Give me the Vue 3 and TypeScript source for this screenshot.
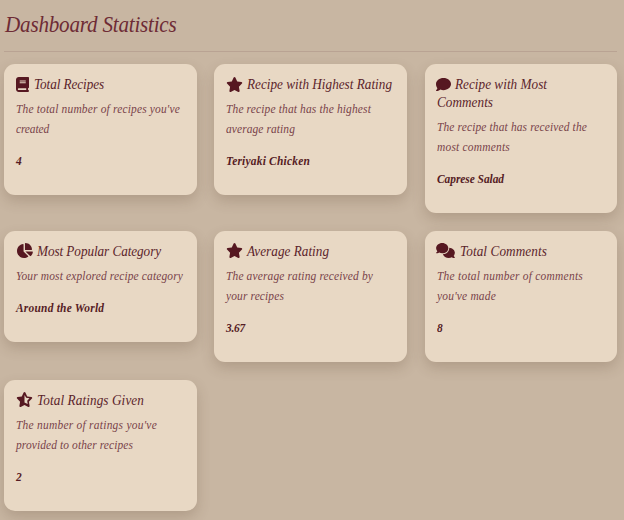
<script setup lang="ts">
interface Line {
  text: string
  width: number
}
interface Icon {
  box: string
  width: number
  path: string
}
interface Stat {
  icon: Icon
  gap: number
  title: Line[]
  description: Line[]
  value: Line
}

const starShape = 'M316.900 18C311.600 7 300.400 0 288.100 0s-23.400 7-28.800 18L195 150.300 51.400 171.500c-12 1.800-22 10.200-25.700 21.700s-.7 24.200 7.900 32.700L137.800 329 113.200 474.700c-2 12 3 24.200 12.900 31.300s23 8 33.800 2.300l128.300-68.500 128.300 68.500c10.800 5.700 23.900 4.900 33.800-2.300s14.900-19.300 12.900-31.300L438.500 329 542.700 225.900c8.600-8.500 11.700-21.200 7.900-32.700s-13.700-19.900-25.700-21.700L381.200 150.300 316.900 18z'
const star: Icon = { box: '0 0 576 512', width: 17, path: starShape }
const halfStar: Icon = {
  box: '0 0 576 512',
  width: 17,
  path: starShape + 'M288 100L346 197L458 215L380 298L396 410L288 358z',
}
const book: Icon = {
  box: '0 0 448 512',
  width: 13,
  path: 'M96 0C43 0 0 43 0 96V416c0 53 43 96 96 96H384h32c17.700 0 32-14.300 32-32s-14.300-32-32-32V384c17.700 0 32-14.300 32-32V32c0-17.700-14.300-32-32-32H384 96zm0 384H352v64H96c-17.700 0-32-14.300-32-32s14.300-32 32-32zM128 118H336V152H128zM128 182H336V216H128z',
}
const comment: Icon = {
  box: '0 0 512 512',
  width: 15,
  path: 'M512 240c0 114.900-114.600 208-256 208c-37.100 0-72.300-6.400-104.100-17.900c-11.900 8.700-31.300 20.600-54.300 30.600C73.600 471.100 44.700 480 16 480c-6.500 0-12.300-3.900-14.800-9.900c-2.500-6-1.100-12.800 3.400-17.400c20-20.500 36.700-48.700 42.700-72.900C17.600 341.700 0 292.900 0 240C0 125.100 114.600 32 256 32s256 93.100 256 208z',
}
const comments: Icon = {
  box: '0 0 640 512',
  width: 19,
  path: 'M208 352c114.900 0 208-78.800 208-176S322.900 0 208 0S0 78.800 0 176c0 38.600 14.700 74.300 39.600 103.400c-3.500 9.400-8.700 17.700-14.200 24.700c-4.800 6.200-9.700 11-13.300 14.300C4.700 325.200.2 330.200.2 337.200C.2 345.300 7.200 352 16 352c21.900 0 44-5.600 62.300-12.500c9.200-3.500 17.800-7.400 25.300-11.400C134.100 343.300 169.800 352 208 352zM448 176c0 112.300-99.100 196.900-216.500 207C255.800 457.400 336.400 512 432 512c38.200 0 73.900-8.700 104.700-23.900c7.500 4 16 7.900 25.300 11.400c18.300 6.900 40.300 12.500 62.200 12.500c8.800 0 15.800-6.700 15.800-14.800c0-7-4.500-12-11.600-18.900c-3.600-3.300-8.500-8.100-13.300-14.300c-5.500-7-10.700-15.400-14.200-24.700C625.300 410.300 640 374.600 640 336c0-92.800-84.900-168.900-192.600-175.500c.4 5.100.6 10.300.6 15.500z',
}
const pie: Icon = {
  box: '0 0 576 512',
  width: 17,
  path: 'M304 240V16.600c0-9 7-16.600 16-16.600C443.700 0 544 100.300 544 224c0 9-7.600 16-16.600 16H304zM32 272C32 150.700 122.100 50.300 239 34.300c9.200-1.300 17 6.100 17 15.400V288L412.500 444.500c6.700 6.700 6.200 17.700-1.500 23.100C371.800 495.600 323.800 512 272 512C139.500 512 32 404.600 32 272zm526.400 16c9.300 0 16.600 7.800 15.400 17c-7.700 55.900-34.600 105.600-73.900 142.300c-6 5.600-15.400 5.200-21.200-.7L320 288H558.400z',
}

const stats: Stat[] = [
  {
    icon: book,
    gap: 5,
    title: [{ text: 'Total Recipes', width: 70 }],
    description: [{ text: "The total number of recipes you've", width: 164 }, { text: 'created', width: 33 }],
    value: { text: '4', width: 6 },
  },
  {
    icon: star,
    gap: 4,
    title: [{ text: 'Recipe with Highest Rating', width: 145 }],
    description: [{ text: 'The recipe that has the highest', width: 145 }, { text: 'average rating', width: 69 }],
    value: { text: 'Teriyaki Chicken', width: 84 },
  },
  {
    icon: comment,
    gap: 4,
    title: [{ text: 'Recipe with Most', width: 92 }, { text: 'Comments', width: 56 }],
    description: [{ text: 'The recipe that has received the', width: 150 }, { text: 'most comments', width: 73 }],
    value: { text: 'Caprese Salad', width: 67 },
  },
  {
    icon: pie,
    gap: 4,
    title: [{ text: 'Most Popular Category', width: 124 }],
    description: [{ text: 'Your most explored recipe category', width: 167 }],
    value: { text: 'Around the World', width: 88.5 },
  },
  {
    icon: star,
    gap: 4,
    title: [{ text: 'Average Rating', width: 82 }],
    description: [{ text: 'The average rating received by', width: 147 }, { text: 'your recipes', width: 58 }],
    value: { text: '3.67', width: 19 },
  },
  {
    icon: comments,
    gap: 5,
    title: [{ text: 'Total Comments', width: 87 }],
    description: [{ text: 'The total number of comments', width: 146 }, { text: "you've made", width: 59 }],
    value: { text: '8', width: 6 },
  },
  {
    icon: halfStar,
    gap: 4.5,
    title: [{ text: 'Total Ratings Given', width: 107 }],
    description: [{ text: "The number of ratings you've", width: 141 }, { text: 'provided to other recipes', width: 117 }],
    value: { text: '2', width: 6 },
  },
]

// The lettering is condensed; tracking takes up what remains of each line's width.
const condense = 0.88
const pen = document.createElement('canvas').getContext('2d')!
function tracking(line: Line, font: string) {
  pen.font = `italic ${font} "Liberation Serif"`
  const spare = line.width / condense - pen.measureText(line.text).width
  return { letterSpacing: `${(spare / line.text.length).toFixed(3)}px` }
}
const heading: Line = { text: 'Dashboard Statistics', width: 171.5 }
</script>

<template>
  <main class="dashboard">
    <h1><span class="condensed" :style="tracking(heading, '400 24px')">{{ heading.text }}</span></h1>
    <div class="grid">
      <article v-for="(stat, i) in stats" :key="i" class="card">
        <h2>
          <span v-for="(line, n) in stat.title" :key="n" class="line">
            <svg v-if="n === 0" class="icon" :viewBox="stat.icon.box" :style="{ width: stat.icon.width + 'px', marginRight: stat.gap + 'px' }">
              <path :d="stat.icon.path" fill-rule="evenodd" />
            </svg>
            <span class="condensed" :style="tracking(line, '400 15px')">{{ line.text }}</span>
          </span>
        </h2>
        <p class="description">
          <span v-for="(line, n) in stat.description" :key="n" class="line">
            <span class="condensed" :style="tracking(line, '400 13px')">{{ line.text }}</span>
          </span>
        </p>
        <p class="value"><span class="condensed" :style="tracking(stat.value, '700 13px')">{{ stat.value.text }}</span></p>
      </article>
    </div>
  </main>
</template>

<style>
body {
  background: #c8b6a2;
  overflow: hidden;
}
</style>

<style scoped>
.dashboard {
  box-sizing: border-box;
  height: 520px;
  padding: 0 6.6px 0 4px;
  font-family: "Liberation Serif", serif;
  font-style: italic;
  white-space: nowrap;
}
.condensed {
  display: inline-block;
  transform: scaleX(0.88);
  transform-origin: left;
}
h1 {
  box-sizing: border-box;
  height: 52px;
  margin: 0 0 12px;
  padding: 9px 0 0 1px;
  border-bottom: 1px solid #b9a393;
  font-size: 24px;
  line-height: 30px;
  font-weight: 400;
  color: #6e2b35;
}
.grid {
  display: grid;
  grid-template-columns: repeat(3, 1fr);
  align-items: start;
  gap: 17.8px 17.5px;
}
.card {
  box-sizing: border-box;
  min-width: 0;
  padding: 11px 12px 24px;
  border-radius: 11px;
  background: #e8d8c4;
  box-shadow: 0 6px 14px rgba(80, 55, 35, 0.2);
}
h2 {
  margin: 0 0 6px;
  font-size: 15px;
  line-height: 18px;
  font-weight: 400;
  color: #5b242b;
}
.line {
  display: flex;
  align-items: center;
}
.icon {
  flex: none;
  height: 15px;
  margin-left: -0.4px;
  fill: #561821;
}
.description {
  margin: 0 0 12px;
  font-size: 13px;
  line-height: 20px;
  color: #79434a;
}
.value {
  margin: 0;
  font-size: 13px;
  line-height: 20px;
  font-weight: 700;
  color: #561c25;
}
</style>
